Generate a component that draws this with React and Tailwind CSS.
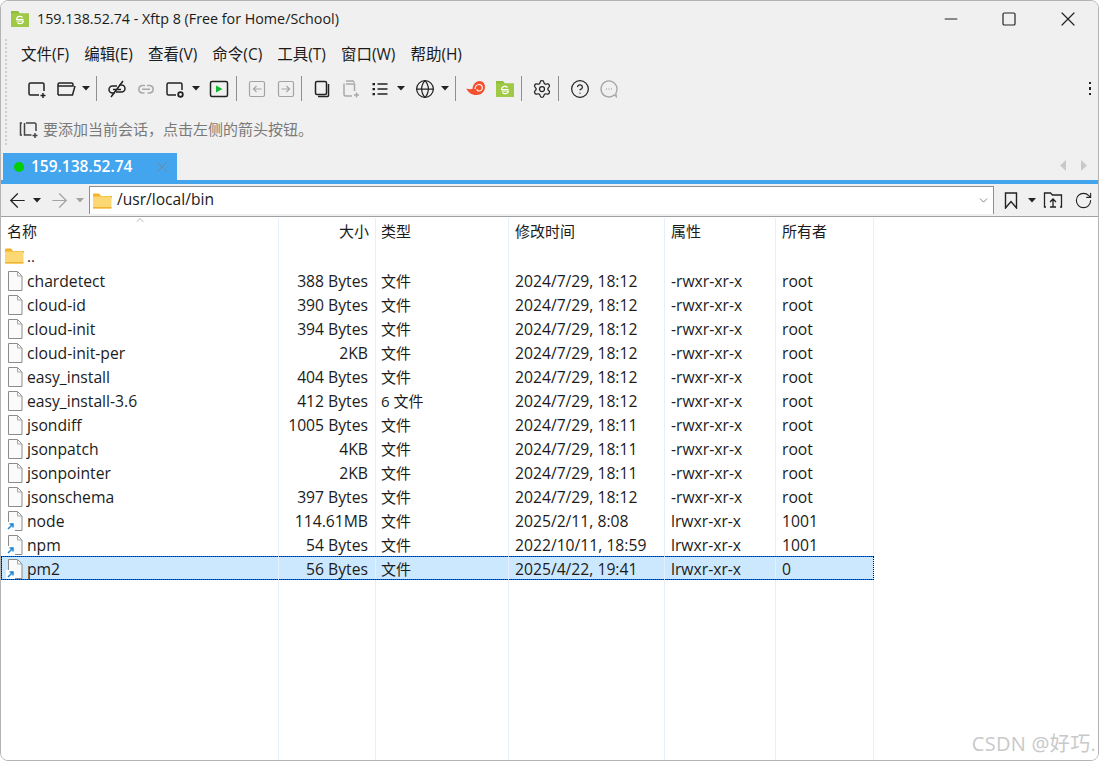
import React from 'react';
import { ArrowLeft, ArrowRight, ChevronDown, ChevronUp, Globe, Settings, CircleHelp, RotateCw, X, Minus, Square } from 'lucide-react';

const files = [
  { name: 'chardetect', size: '388 Bytes', type: '文件', time: '2024/7/29, 18:12', attr: '-rwxr-xr-x', owner: 'root' },
  { name: 'cloud-id', size: '390 Bytes', type: '文件', time: '2024/7/29, 18:12', attr: '-rwxr-xr-x', owner: 'root' },
  { name: 'cloud-init', size: '394 Bytes', type: '文件', time: '2024/7/29, 18:12', attr: '-rwxr-xr-x', owner: 'root' },
  { name: 'cloud-init-per', size: '2KB', type: '文件', time: '2024/7/29, 18:12', attr: '-rwxr-xr-x', owner: 'root' },
  { name: 'easy_install', size: '404 Bytes', type: '文件', time: '2024/7/29, 18:12', attr: '-rwxr-xr-x', owner: 'root' },
  { name: 'easy_install-3.6', size: '412 Bytes', type: '6 文件', time: '2024/7/29, 18:12', attr: '-rwxr-xr-x', owner: 'root' },
  { name: 'jsondiff', size: '1005 Bytes', type: '文件', time: '2024/7/29, 18:11', attr: '-rwxr-xr-x', owner: 'root' },
  { name: 'jsonpatch', size: '4KB', type: '文件', time: '2024/7/29, 18:11', attr: '-rwxr-xr-x', owner: 'root' },
  { name: 'jsonpointer', size: '2KB', type: '文件', time: '2024/7/29, 18:11', attr: '-rwxr-xr-x', owner: 'root' },
  { name: 'jsonschema', size: '397 Bytes', type: '文件', time: '2024/7/29, 18:12', attr: '-rwxr-xr-x', owner: 'root' },
  { name: 'node', size: '114.61MB', type: '文件', time: '2025/2/11, 8:08', attr: 'lrwxr-xr-x', owner: '1001', link: true },
  { name: 'npm', size: '54 Bytes', type: '文件', time: '2022/10/11, 18:59', attr: 'lrwxr-xr-x', owner: '1001', link: true },
  { name: 'pm2', size: '56 Bytes', type: '文件', time: '2025/4/22, 19:41', attr: 'lrwxr-xr-x', owner: '0', link: true, selected: true },
];

const menus = ['文件(F)', '编辑(E)', '查看(V)', '命令(C)', '工具(T)', '窗口(W)', '帮助(H)'];

const gridCols = 'grid grid-cols-[278px_97px_133px_156px_111px_98px_1fr]';

const Ico = ({ children, className = 'text-[#222]', w = 20, h = 20 }) => (
  <svg width={w} height={h} viewBox={`0 0 ${w} ${h}`} fill="none" stroke="currentColor" strokeWidth="1.5" className={`shrink-0 ${className}`}>
    {children}
  </svg>
);

const Caret = ({ className = 'text-[#222]' }) => (
  <svg width="8" height="5" viewBox="0 0 8 5" className={`shrink-0 ${className}`}>
    <path d="M0 0h8L4 4.5z" fill="currentColor" />
  </svg>
);

const Sep = () => <div className="w-px h-[25px] bg-[#8f8f8f] shrink-0" />;

const NewSession = () => (
  <Ico>
    <path d="M12 16H3.500a1.500 1.500 0 0 1-1.500-1.500V5.500A1.500 1.500 0 0 1 3.500 4h12A1.500 1.500 0 0 1 17 5.500V12" />
    <path d="M16 14v5M13.500 16.500h5" />
  </Ico>
);

const OpenFolder = () => (
  <Ico>
    <path d="M2 16V5.500A1.500 1.500 0 0 1 3.500 4h12A1.500 1.500 0 0 1 17 5.500V7H2M2 16h14.500L19 7" />
  </Ico>
);

const LinkOff = () => (
  <Ico>
    <path d="M8 14H5.500a3.500 3.500 0 0 1 0-7H10M12 6h2.500a3.500 3.500 0 0 1 0 7H9M6 10.500h8M4 18 16 2" />
  </Ico>
);

const LinkOn = () => (
  <Ico className="text-[#a9a9a9]">
    <path d="M8.500 14H6a3.800 3.800 0 0 1 0-7.500h3M11 6.500h3a3.800 3.800 0 0 1 0 7.500h-2.500M6 10.300h8" />
  </Ico>
);

const SessionGear = () => (
  <Ico>
    <path d="M11 16H3.500A1.500 1.500 0 0 1 2 14.500v-9A1.500 1.500 0 0 1 3.500 4h12A1.500 1.500 0 0 1 17 5.500V11" />
    <circle cx="15.500" cy="15.500" r="2.300" strokeWidth="1.800" />
  </Ico>
);

const Run = () => (
  <Ico>
    <rect x="1.500" y="2.500" width="17" height="15" rx="1.500" />
    <path d="M7 6.500 13.500 10 7 13.500z" fill="#10b82e" stroke="none" />
  </Ico>
);

const TransferIcon = ({ flip }) => (
  <Ico className="text-[#a3a3a3]" w={18} h={18}>
    <rect x="1.500" y="1.500" width="15" height="15" rx="1.500" strokeWidth="1.200" />
    {flip ? <path d="M4.500 9h8M9.500 6l3 3-3 3" strokeWidth="1.200" /> : <path d="M13.500 9h-8M8.500 6l-3 3 3 3" strokeWidth="1.200" />}
  </Ico>
);

const CopyIcon = () => (
  <Ico w={18} h={18}>
    <rect x="2.500" y="1.500" width="11" height="13" rx="1.500" />
    <path d="M15.500 4v11.500a1 1 0 0 1-1 1H5" />
  </Ico>
);

const PasteIcon = () => (
  <Ico className="text-[#a9a9a9]">
    <path d="M5 2h7l1.500 1.500M3 4.500v11A1.500 1.500 0 0 0 4.500 17H11M5 5h8.500V12" />
    <path d="M15.500 13.500v5M13 16h5" />
  </Ico>
);

const ListIcon = () => (
  <Ico w={18} h={18}>
    <path d="M6.500 4h10M6.500 9h10M6.500 14h10" strokeWidth="1.500" />
    <path d="M1.500 3h2.500v2.200H1.500zM1.500 8h2.500v2.200H1.500zM1.500 13h2.500v2.200H1.500z" fill="currentColor" stroke="none" />
  </Ico>
);

const Snail = () => (
  <svg width="20" height="18" viewBox="0 0 20 18" className="shrink-0">
    <path d="M.5 8.500c2.500 1 4.500 1 6 .3.300-4 3-7.800 7-7.800 3.500 0 5.500 2.800 5.500 6 0 4.500-3.800 8-8.500 8C5.500 15 2 12.500.5 8.500z" fill="#f4502f" />
    <path d="M9 9c0-2.500 1.800-4.500 4-4.500s3.300 1.500 3.300 3.200c0 2-1.700 3.300-3.300 3.300-1.200 0-2-.8-2-1.800" fill="none" stroke="#fff" strokeWidth="1.200" />
  </svg>
);

const GreenFolder = ({ size = 18 }) => (
  <svg width={size} height={size} viewBox="0 0 18 18" className="shrink-0">
    <path d="M0 1h7l2 2.500h9V17H0z" fill="#8fbe3c" />
    <path d="M0 3.500h18V17H0z" fill="#a1c948" />
    <path d="M5.500 9a3.500 3.500 0 0 1 6-1.500M12.500 11a3.500 3.500 0 0 1-6 1.500M5 9.500h7.500M5.500 11h7.500" fill="none" stroke="#fff" strokeWidth="1.200" />
  </svg>
);

const Chat = () => (
  <Ico className="text-[#a5a5a5]">
    <path d="M17.300 17.500 15.500 15.800A8 8 0 1 1 18 10c0 1.600-.4 3-1.100 4.300z" strokeWidth="1.300" />
    <path d="M7 10h.8M9.600 10h.8M12.200 10h.8" strokeWidth="1.300" />
  </Ico>
);

const SmallFolder = () => (
  <svg width="19" height="16" viewBox="0 0 19 16" className="shrink-0">
    <path d="M0 1.500A1 1 0 0 1 1 .5h5l2 2.500h11v2H0z" fill="#f5b32a" />
    <rect y="3.500" width="18.500" height="12" rx="1" fill="#fcd874" />
    <rect y="14" width="18.500" height="1.500" fill="#efb32f" />
  </svg>
);

const FileIcon = ({ link }) => (
  <svg width="18" height="20" viewBox="0 0 18 20" className="shrink-0">
    <path d="M2.500.5h9l4.500 4.500v14.500H2.500z" fill="#fafafa" stroke="#8b8b8b" />
    <path d="M11.500.5V5H16" fill="none" stroke="#a8a8a8" />
    {link && (
      <g>
        <rect x="0" y="11" width="9" height="9" fill="#fff" />
        <path d="M2 18 6.500 13.500M3.500 13h3.500v3.500" fill="none" stroke="#1c86d9" strokeWidth="1.500" />
      </g>
    )}
  </svg>
);

const Cell = ({ children, className = '' }) => (
  <div className={`min-w-0 flex items-center whitespace-nowrap border-r border-[#e6eff9] ${className}`}>{children}</div>
);

const FileRow = ({ file }) => (
  <div className={`${gridCols} h-[24px] text-[15.7px] ${file.selected ? 'bg-[#cce8ff] outline-1 outline-dotted outline-[#111] -outline-offset-1 shadow-[inset_0_0_0_1px_#0078d7] w-[873px]' : ''}`}>
    <Cell className="pl-[5px] gap-[3px]">
      <FileIcon link={file.link} />
      <span className="mt-[2px]">{file.name}</span>
    </Cell>
    <Cell className="justify-end pr-[7px] pt-[2px]">{file.size}</Cell>
    <Cell className="pl-[5px] text-[15px]">{file.type}</Cell>
    <Cell className="pl-[6px] pt-[2px]">{file.time}</Cell>
    <Cell className="pl-[6px] pt-[2px]">{file.attr}</Cell>
    <Cell className="pl-[6px] pt-[2px]">{file.owner}</Cell>
  </div>
);

export default function App() {
  return (
    <div className="relative h-[761px] w-[1099px] overflow-hidden bg-white text-[15px] text-[#1b1b1b] font-['Open_Sans','Noto_Sans_CJK_SC',sans-serif]">
      <div className="h-full flex flex-col rounded-lg border border-[#b4b4b4] overflow-hidden">
        {/* title bar */}
        <div className="h-[36px] bg-[#f0f0f0] flex items-center pl-[10px] shrink-0">
          <GreenFolder size={18} />
          <span className="ml-[8px] text-[14.3px]">159.138.52.74 - Xftp 8 (Free for Home/School)</span>
          <div className="ml-auto flex items-center text-[#222]">
            <Minus size={20} strokeWidth={1.4} className="mr-[40px]" />
            <Square size={16} strokeWidth={1.8} className="mr-[39px]" />
            <X size={24} strokeWidth={1.2} className="mr-[18px]" />
          </div>
        </div>

        {/* menu + toolbars */}
        <div className="bg-[#f0f0f0] flex shrink-0 h-[110px]">
          <div className="ml-[4px] mt-[2px] mb-[2px] w-0 border-l-2 border-dotted border-[#cdcdcd]" />
          <div className="flex-1 flex flex-col">
            <div className="h-[34px] flex items-center pl-[14px] pt-[1px] gap-[15px] text-[15.5px]">
              {menus.map((m) => (
                <span key={m}>{m}</span>
              ))}
            </div>
            <div className="h-[35px] flex items-center pl-[20px]">
              <NewSession />
              <div className="ml-[9px]"><OpenFolder /></div>
              <div className="ml-[6px]"><Caret /></div>
              <div className="ml-[6px]"><Sep /></div>
              <div className="ml-[10px]"><LinkOff /></div>
              <div className="ml-[9px]"><LinkOn /></div>
              <div className="ml-[9px]"><SessionGear /></div>
              <div className="ml-[7px]"><Caret /></div>
              <div className="ml-[9px]"><Run /></div>
              <div className="ml-[7px]"><Sep /></div>
              <div className="ml-[11px]"><TransferIcon /></div>
              <div className="ml-[11px]"><TransferIcon flip /></div>
              <div className="ml-[6px]"><Sep /></div>
              <div className="ml-[11px]"><CopyIcon /></div>
              <div className="ml-[10px]"><PasteIcon /></div>
              <div className="ml-[10px]"><ListIcon /></div>
              <div className="ml-[8px]"><Caret /></div>
              <div className="ml-[10px]"><Globe size={20} strokeWidth={1.5} className="text-[#222]" /></div>
              <div className="ml-[6px]"><Caret /></div>
              <div className="ml-[6px]"><Sep /></div>
              <div className="ml-[10px]"><Snail /></div>
              <div className="ml-[10px]"><GreenFolder /></div>
              <div className="ml-[7px]"><Sep /></div>
              <div className="ml-[10px]"><Settings size={20} strokeWidth={1.5} className="text-[#222]" /></div>
              <div className="ml-[6px]"><Sep /></div>
              <div className="ml-[11px]"><CircleHelp size={20} strokeWidth={1.5} className="text-[#222]" /></div>
              <div className="ml-[9px]"><Chat /></div>
              <div className="ml-auto mr-[7px] flex flex-col gap-[3px]">
                <div className="size-[2.5px] bg-[#222]" />
                <div className="size-[2.5px] bg-[#222]" />
                <div className="size-[2.5px] bg-[#222]" />
              </div>
            </div>
            <div className="h-[41px] flex items-center pl-[12px] pt-[5px] text-[#7a7a7a] text-[15px]">
              <Ico className="text-[#444]" w={19} h={19}>
                <path d="M3 3H1.500v12H3M7 3h8.500A1.500 1.500 0 0 1 17 4.500V11M5.500 3v12h7" />
                <path d="M16 13v5M13.500 15.500h5" />
              </Ico>
              <span className="ml-[5px]">要添加当前会话，点击左侧的箭头按钮。</span>
            </div>
          </div>
        </div>

        {/* tab strip */}
        <div className="h-[33px] bg-[#f0f0f0] flex items-end pl-[2px] shrink-0">
          <div className="w-[174px] h-[27px] bg-[#42a5ee] flex items-center pl-[11px] text-white font-semibold text-[15.5px]">
            <span className="size-[10px] rounded-full bg-[#00cf00]" />
            <span className="ml-[7px] mt-[1px]">159.138.52.74</span>
            <X size={20} strokeWidth={1.2} className="ml-[20px] text-[#6f8aa0]" />
          </div>
          <div className="ml-auto mb-[9px] mr-[11px] flex gap-[15px] text-[#c9c9c9]">
            <svg width="6" height="11" viewBox="0 0 6 11"><path d="M6 0v11L0 5.500z" fill="currentColor" /></svg>
            <svg width="6" height="11" viewBox="0 0 6 11"><path d="M0 0v11l6-5.500z" fill="currentColor" /></svg>
          </div>
        </div>
        <div className="h-[4px] bg-[#42a5ee] shrink-0" />

        {/* address bar */}
        <div className="h-[33px] bg-[#f0f0f0] flex items-center border-b border-[#a0a0a0] shrink-0">
          <ArrowLeft size={23} strokeWidth={1.3} className="ml-[5px] text-[#222]" />
          <div className="ml-[4px]"><Caret /></div>
          <ArrowRight size={23} strokeWidth={1.3} className="ml-[7px] text-[#a3a3a3]" />
          <div className="ml-[5px]"><Caret className="text-[#a3a3a3]" /></div>
          <div className="ml-[5px] w-[905px] h-[28px] self-start mt-[2px] bg-white border border-b-0 border-[#8e8e8e] flex items-center pl-[3px]">
            <SmallFolder />
            <span className="ml-[5px] mb-[1px] text-[15.6px]">/usr/local/bin</span>
            <ChevronDown size={13} strokeWidth={1.2} className="ml-auto mr-[3px] text-[#444]" />
          </div>
          <svg width="14" height="17" viewBox="0 0 14 17" fill="none" stroke="#222" strokeWidth="1.400" className="ml-[10px]">
            <path d="M1.500 1h11v15L7 9.500 1.500 16z" />
          </svg>
          <div className="ml-[10px]"><Caret /></div>
          <svg width="20" height="18" viewBox="0 0 20 18" fill="none" stroke="#222" strokeWidth="1.300" className="ml-[7px]">
            <path d="M3 16H1.500V2h6l2 2h9v12H17M10 16V8M7 11l3-3 3 3M7 16h6" />
          </svg>
          <RotateCw size={19} strokeWidth={1.4} className="ml-[11px] text-[#222]" />
        </div>

        {/* file list */}
        <div className="flex-1 flex flex-col bg-white">
          <div className={`${gridCols} h-[27px] relative pt-[1px]`}>
            <Cell className="pl-[6px] border-[#e5e5e5]">名称</Cell>
            <Cell className="justify-end pr-[6px] border-[#e5e5e5]">大小</Cell>
            <Cell className="pl-[5px] border-[#e5e5e5]">类型</Cell>
            <Cell className="pl-[6px] border-[#e5e5e5]">修改时间</Cell>
            <Cell className="pl-[6px] border-[#e5e5e5]">属性</Cell>
            <Cell className="pl-[6px] border-[#e5e5e5]">所有者</Cell>
            <ChevronUp size={12} strokeWidth={1} className="absolute left-[133px] top-[-3px] text-[#666]" />
          </div>
          <div className={`${gridCols} h-[24px]`}>
            <Cell className="pl-[4px] gap-[3px]">
              <SmallFolder />
              <span>..</span>
            </Cell>
            <Cell />
            <Cell />
            <Cell />
            <Cell />
            <Cell />
          </div>
          {files.map((f) => (
            <FileRow key={f.name} file={f} />
          ))}
          <div className={`${gridCols} flex-1`}>
            <Cell />
            <Cell />
            <Cell />
            <Cell />
            <Cell />
            <Cell />
          </div>
        </div>
      </div>
      <span className="absolute right-[3px] bottom-[2px] text-[20px] text-[#c9c9c9] tracking-[0.3px]">CSDN @好巧.</span>
    </div>
  );
}
